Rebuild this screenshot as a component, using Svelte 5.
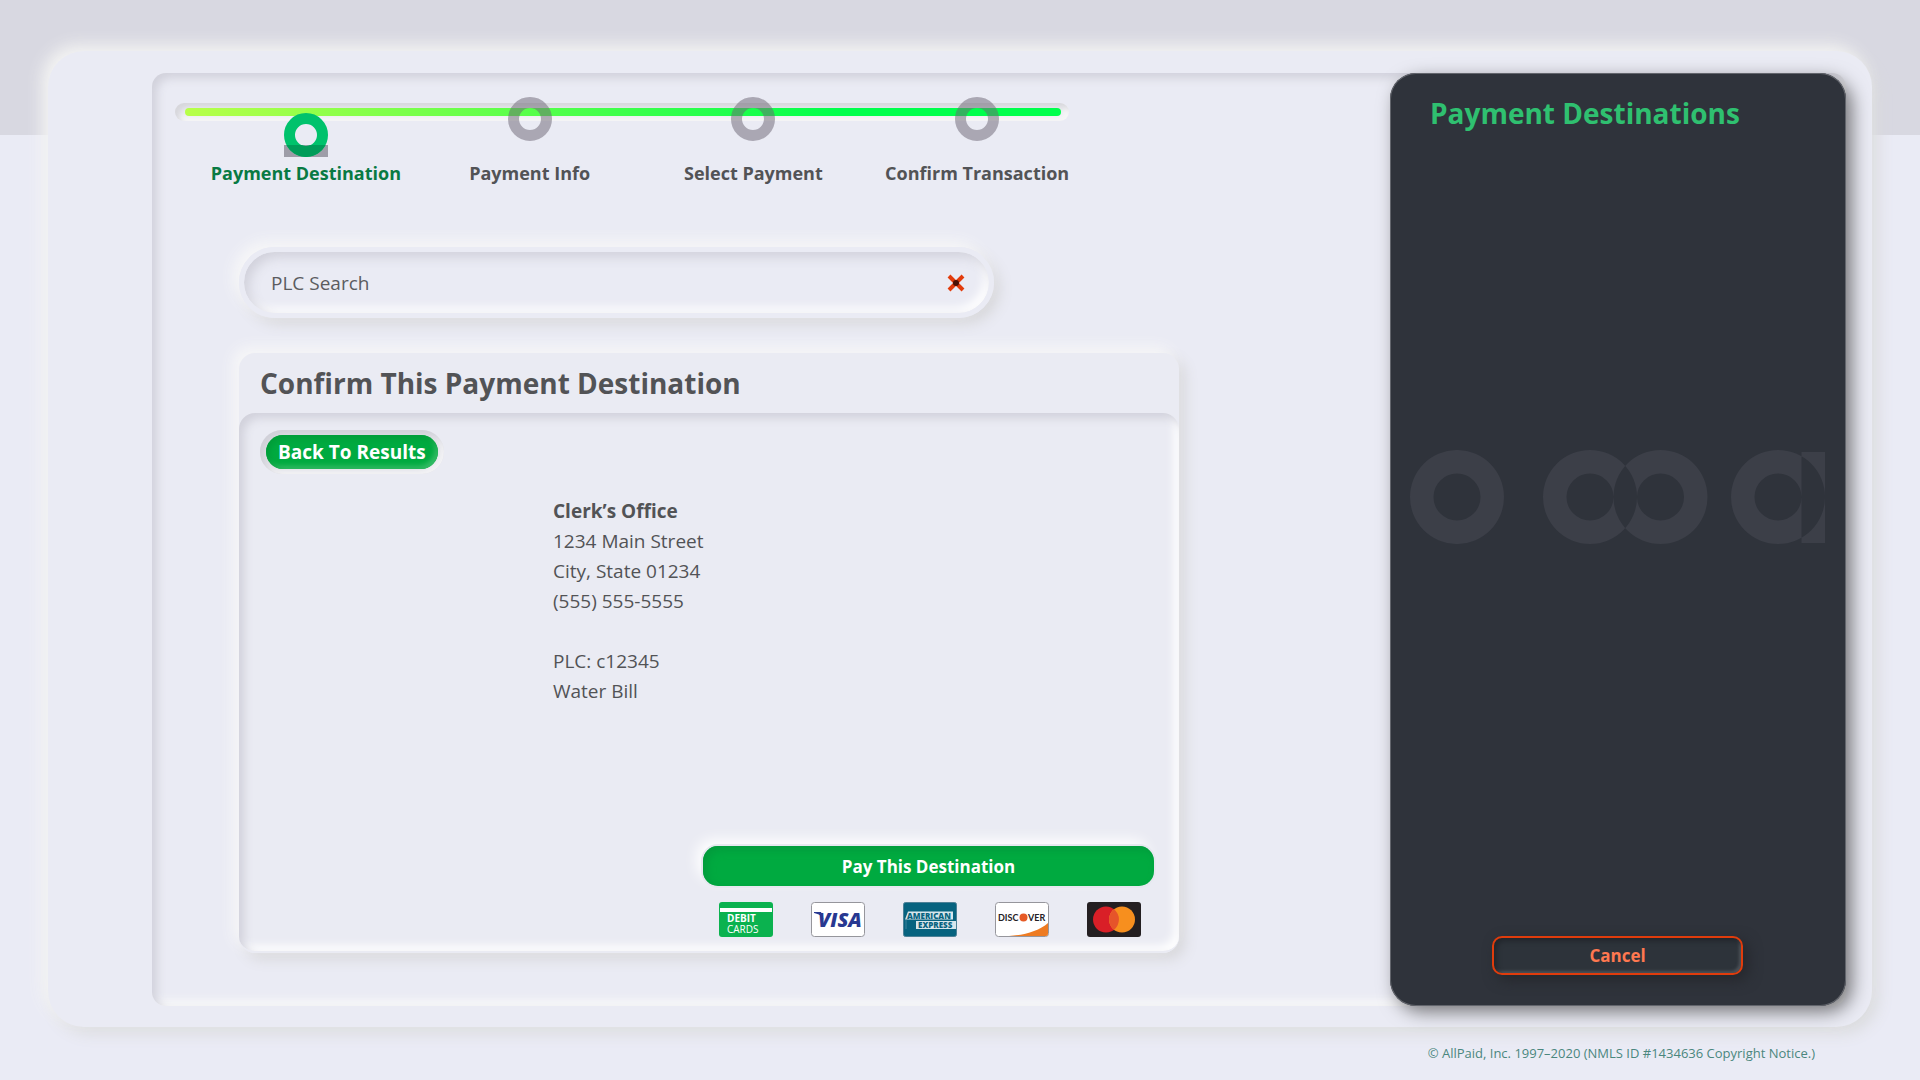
<script lang="ts">
	const steps = ['Payment Destination', 'Payment Info', 'Select Payment', 'Confirm Transaction'];
	const current = 0;

	let search = $state('');

	function clearSearch() {
		search = '';
	}
</script>

<div class="page">
	<div class="shell">
		<div class="well">
			<main>
				<nav class="stepper" aria-label="Payment progress">
					<div class="track"><div class="bar"></div></div>
					<ol>
						{#each steps as step, i}
							<li class:active={i === current} aria-current={i === current ? 'step' : undefined}>
								<span class="marker">
									<svg width="44" height="44" viewBox="0 0 44 44" aria-hidden="true">
										{#if i === current}
											<rect y="32" width="44" height="12" fill="#9e9da8" />
											<circle cx="22" cy="22" r="16.5" fill="none" stroke="#00c26c" stroke-width="11" />
											<path
												d="M2.4 32A22 22 0 0 0 41.6 32H26.6A11 11 0 0 1 17.4 32Z"
												fill="#009c59"
											/>
										{:else}
											<circle cx="22" cy="22" r="16.5" fill="none" stroke="#69647280" stroke-width="11" />
										{/if}
									</svg>
								</span>
								<span class="step-label">{step}</span>
							</li>
						{/each}
					</ol>
				</nav>

				<div class="content">
					<div class="search">
						<input type="text" placeholder="PLC Search" aria-label="PLC Search" bind:value={search} />
						<button type="button" class="clear" aria-label="Clear search" onclick={clearSearch}>
							<svg width="18" height="18" viewBox="0 0 18 18" aria-hidden="true">
								<path d="M2 2l14 14M16 2L2 16" stroke="#e23c0c" stroke-width="4" />
								<circle cx="9" cy="9" r="3" fill="#4a1206" />
							</svg>
						</button>
					</div>

					<section class="card">
						<h1>Confirm This Payment Destination</h1>
						<div class="card-body">
							<button type="button" class="back"><span>Back To Results</span></button>

							<address>
								<strong>Clerk’s Office</strong>
								<span>1234 Main Street</span>
								<span>City, State 01234</span>
								<span>(555) 555-5555</span>
								<span class="gap">PLC: c12345</span>
								<span>Water Bill</span>
							</address>

							<div class="actions">
								<button type="button" class="pay">Pay This Destination</button>
								<div class="brands">
									<svg viewBox="0 0 54 35" role="img" aria-label="Debit cards">
										<rect width="54" height="35" rx="3" fill="#0bb24f" />
										<rect x="1" y="6" width="52" height="4" fill="#fff" />
										<text x="8" y="20" font-size="10" font-weight="700" fill="#fff">DEBIT</text>
										<text x="8" y="31" font-size="10" fill="#fff">CARDS</text>
									</svg>
									<svg viewBox="0 0 54 35" role="img" aria-label="Visa">
										<rect x=".5" y=".5" width="53" height="34" rx="3" fill="#fff" stroke="#96969c" />
										<text x="7" y="25" font-size="20" font-weight="800" font-style="italic" fill="#283891">VISA</text>
										<path d="M3 10h7l3 8c-2-4-5-6-10-7z" fill="#283891" />
									</svg>
									<svg viewBox="0 0 54 35" role="img" aria-label="American Express">
										<rect x=".5" y=".5" width="53" height="34" rx="2" fill="#07637f" stroke="#4d8197" />
										<path d="M5 9.500h45v8H2zM13 19h40v8H13z" fill="#d7e6ec" />
										<path d="M3 18v9" stroke="#3d839b" />
										<text x="4" y="16.500" class="amex">AMERICAN</text>
										<text x="15" y="26" class="amex">EXPRESS</text>
									</svg>
									<svg viewBox="0 0 54 35" role="img" aria-label="Discover">
										<rect x=".5" y=".5" width="53" height="34" rx="3" fill="#fff" stroke="#96969c" />
										<path d="M14 34C30 33 44 29 53 21v11q0 2-2 2z" fill="#ee7b22" />
										<text x="3" y="19" class="discover">DISC</text>
										<circle cx="28.500" cy="15.500" r="4" fill="#e65a25" />
										<text x="33" y="19" class="discover">VER</text>
									</svg>
									<svg viewBox="0 0 54 35" role="img" aria-label="Mastercard">
										<rect width="54" height="35" rx="3" fill="#241f21" />
										<circle cx="19" cy="17.5" r="13" fill="#d91f27" />
										<circle cx="35" cy="17.5" r="13" fill="#f78f1e" />
										<path d="M27 7.3a13 13 0 0 1 0 20.4a13 13 0 0 1 0-20.4z" fill="#e6542a" />
									</svg>
								</div>
							</div>
						</div>
					</section>
				</div>
			</main>

			<aside>
				<h2>Payment Destinations</h2>
				<svg class="watermark" viewBox="0 0 415 94" aria-hidden="true">
					<g fill="#3c3f48" fill-rule="evenodd">
						<path d="M0 47a47 47 0 1 0 94 0a47 47 0 1 0-94 0zM23.500 47a23.500 23.500 0 1 0 47 0a23.500 23.500 0 1 0-47 0z" />
						<path
							d="M133 47a47 47 0 1 0 94 0a47 47 0 1 0-94 0zM156.500 47a23.500 23.500 0 1 0 47 0a23.500 23.500 0 1 0-47 0zM203.500 47a47 47 0 1 0 94 0a47 47 0 1 0-94 0zM227 47a23.500 23.500 0 1 0 47 0a23.500 23.500 0 1 0-47 0z"
						/>
						<path
							d="M321 47a47 47 0 1 0 94 0a47 47 0 1 0-94 0zM344.500 47a23.500 23.500 0 1 0 47 0a23.500 23.500 0 1 0-47 0zM391.500 2H415V93H391.500z"
						/>
					</g>
				</svg>
				<button type="button" class="cancel">Cancel</button>
			</aside>
		</div>
	</div>
	<footer>© AllPaid, Inc. 1997–2020 (NMLS ID #1434636 Copyright Notice.)</footer>
</div>

<style>
	:global(body) {
		margin: 0;
		background: #eaebf5;
	}

	.page {
		box-sizing: border-box;
		display: flex;
		flex-direction: column;
		min-height: 100vh;
		padding: 51px 48px 0;
		background: linear-gradient(#d8d8e1 135px, #eaebf5 135px);
		font-family: 'Segoe UI', 'Open Sans', 'Noto Sans', sans-serif;
		font-size: 19px;
		color: #525356;
	}

	button,
	input {
		font: inherit;
		color: inherit;
		border: 0;
		padding: 0;
		background: none;
	}

	button {
		cursor: pointer;
	}

	.shell {
		flex: 1;
		display: flex;
		padding: 22px 26px 21px 104px;
		border-radius: 36px;
		background: #eaebf4;
		box-shadow:
			-6px -6px 16px #f4f4f3,
			6px 6px 16px #d9dadc;
	}

	.well {
		flex: 1;
		display: flex;
		border-radius: 14px;
		box-shadow:
			inset 5px 5px 10px #d1d1db,
			inset -5px -5px 10px #fafafa;
	}

	main {
		flex: 1;
		min-width: 0;
	}

	.stepper {
		width: 914px;
		padding: 30px 0 0 23px;
	}

	.track {
		width: 894px;
		height: 18px;
		box-sizing: border-box;
		padding: 5px 8px 5px 10px;
		border-radius: 9px;
		background: #eaebf0;
		box-shadow:
			inset 4px 4px 5px #d7d7dc,
			inset -4px -4px 5px #f6f6f7;
	}

	.bar {
		height: 8px;
		border-radius: 4px;
		background: linear-gradient(90deg, #b8ff49, #00ff4c 75%);
	}

	ol {
		position: relative;
		display: grid;
		grid-template-columns: repeat(4, 1fr);
		margin: -24px 0 0 19px;
		padding: 0;
		list-style: none;
	}

	li {
		display: flex;
		flex-direction: column;
		align-items: center;
	}

	.marker {
		display: flex;
		align-items: flex-start;
		height: 60px;
	}

	.active .marker {
		align-items: flex-end;
	}

	.step-label {
		font-size: 18px;
		font-weight: 700;
		line-height: 32px;
		white-space: nowrap;
	}

	.active .step-label {
		color: #087a43;
	}

	.content {
		width: 940px;
		padding: 58px 0 53px 87px;
	}

	.search {
		box-sizing: border-box;
		display: flex;
		align-items: center;
		width: 755px;
		height: 71px;
		padding: 0 24px 0 27px;
		border: 5px solid #eaebf4;
		border-radius: 36px;
		box-shadow:
			inset 5px 5px 12px #d1d1db,
			inset -5px -5px 10px #ffffff,
			-6px -6px 14px #f7f7f8,
			6px 6px 14px #d7d7da;
	}

	.search input {
		flex: 1;
		height: 40px;
		outline: none;
	}

	.search input::placeholder {
		color: #5b5c60;
		opacity: 1;
	}

	.clear {
		display: flex;
		padding: 4px 0;
	}

	.card {
		display: flex;
		flex-direction: column;
		min-height: 600px;
		margin-top: 35px;
		border-radius: 16px;
		background: #eaebf3;
		box-shadow:
			-6px -6px 14px #f7f7f8,
			6px 6px 14px #d7d7da;
	}

	h1 {
		margin: 0;
		padding: 0 21px;
		font-size: 28px;
		font-weight: 700;
		line-height: 60px;
	}

	.card-body {
		flex: 1;
		display: flex;
		flex-direction: column;
		align-items: flex-start;
		padding: 17px 25px 14px 21px;
		border-bottom: 2px solid #eaebf3;
		border-radius: 16px;
		box-shadow:
			inset 5px 5px 10px #d1d1db,
			inset -5px -5px 10px #ffffff;
	}

	.back {
		padding: 5px 6px;
		border-radius: 22px;
		background: #dfdfe5;
		box-shadow:
			inset 4px 4px 5px #d1d1d9,
			inset -4px -4px 5px #f2f2f5;
	}

	.back span {
		display: block;
		padding: 0 12px;
		border-radius: 17px;
		background: #00aa40;
		box-shadow:
			inset 3px 3px 6px #009c38,
			inset -3px -3px 5px #38bd69;
		color: #fff;
		font-weight: 700;
		line-height: 34px;
	}

	address {
		display: grid;
		margin: 22px 0 0 293px;
		font-style: normal;
		line-height: 30px;
	}

	.gap {
		margin-top: 30px;
	}

	.actions {
		width: 451px;
		margin-top: auto;
		margin-left: auto;
	}

	.pay {
		display: block;
		width: 100%;
		height: 40px;
		border-radius: 15px;
		background: #00aa40;
		color: #fff;
		font-size: 17px;
		font-weight: 700;
		box-shadow:
			inset 4px 4px 8px #029b3c,
			0 0 0 2px #e6e8ef,
			-6px -6px 14px #ffffff;
	}

	.brands {
		display: flex;
		justify-content: space-between;
		padding: 16px 13px 0 16px;
	}

	.brands svg {
		width: 54px;
		height: 35px;
	}

	.amex {
		font-size: 8px;
		font-weight: 800;
		fill: #07637f;
	}

	.discover {
		font-family: Lato, sans-serif;
		font-size: 9px;
		font-weight: 700;
		fill: #242126;
	}

	aside {
		box-sizing: border-box;
		display: flex;
		flex-direction: column;
		width: 456px;
		padding: 20px 21px 31px 20px;
		border-radius: 26px;
		background: #2f333b;
		box-shadow:
			inset 0 0 0 1px #62656c,
			6px 6px 18px #77777a;
	}

	h2 {
		margin: 0 0 317px;
		padding-left: 20px;
		color: #2fc070;
		font-size: 28px;
		font-weight: 700;
		line-height: 40px;
	}

	.cancel {
		width: 251px;
		height: 39px;
		margin: auto auto 0;
		border: 2px solid #e03c0c;
		border-radius: 10px;
		background: #2d333a;
		box-shadow:
			inset 3px 3px 5px #22262c,
			inset -2px -2px 3px #50545a,
			5px 5px 14px #25272c;
		color: #ff7850;
		font-size: 17px;
		font-weight: 700;
	}

	footer {
		padding: 16px 57px;
		color: #4b877e;
		font-size: 13px;
		line-height: 21px;
		text-align: right;
	}
</style>
